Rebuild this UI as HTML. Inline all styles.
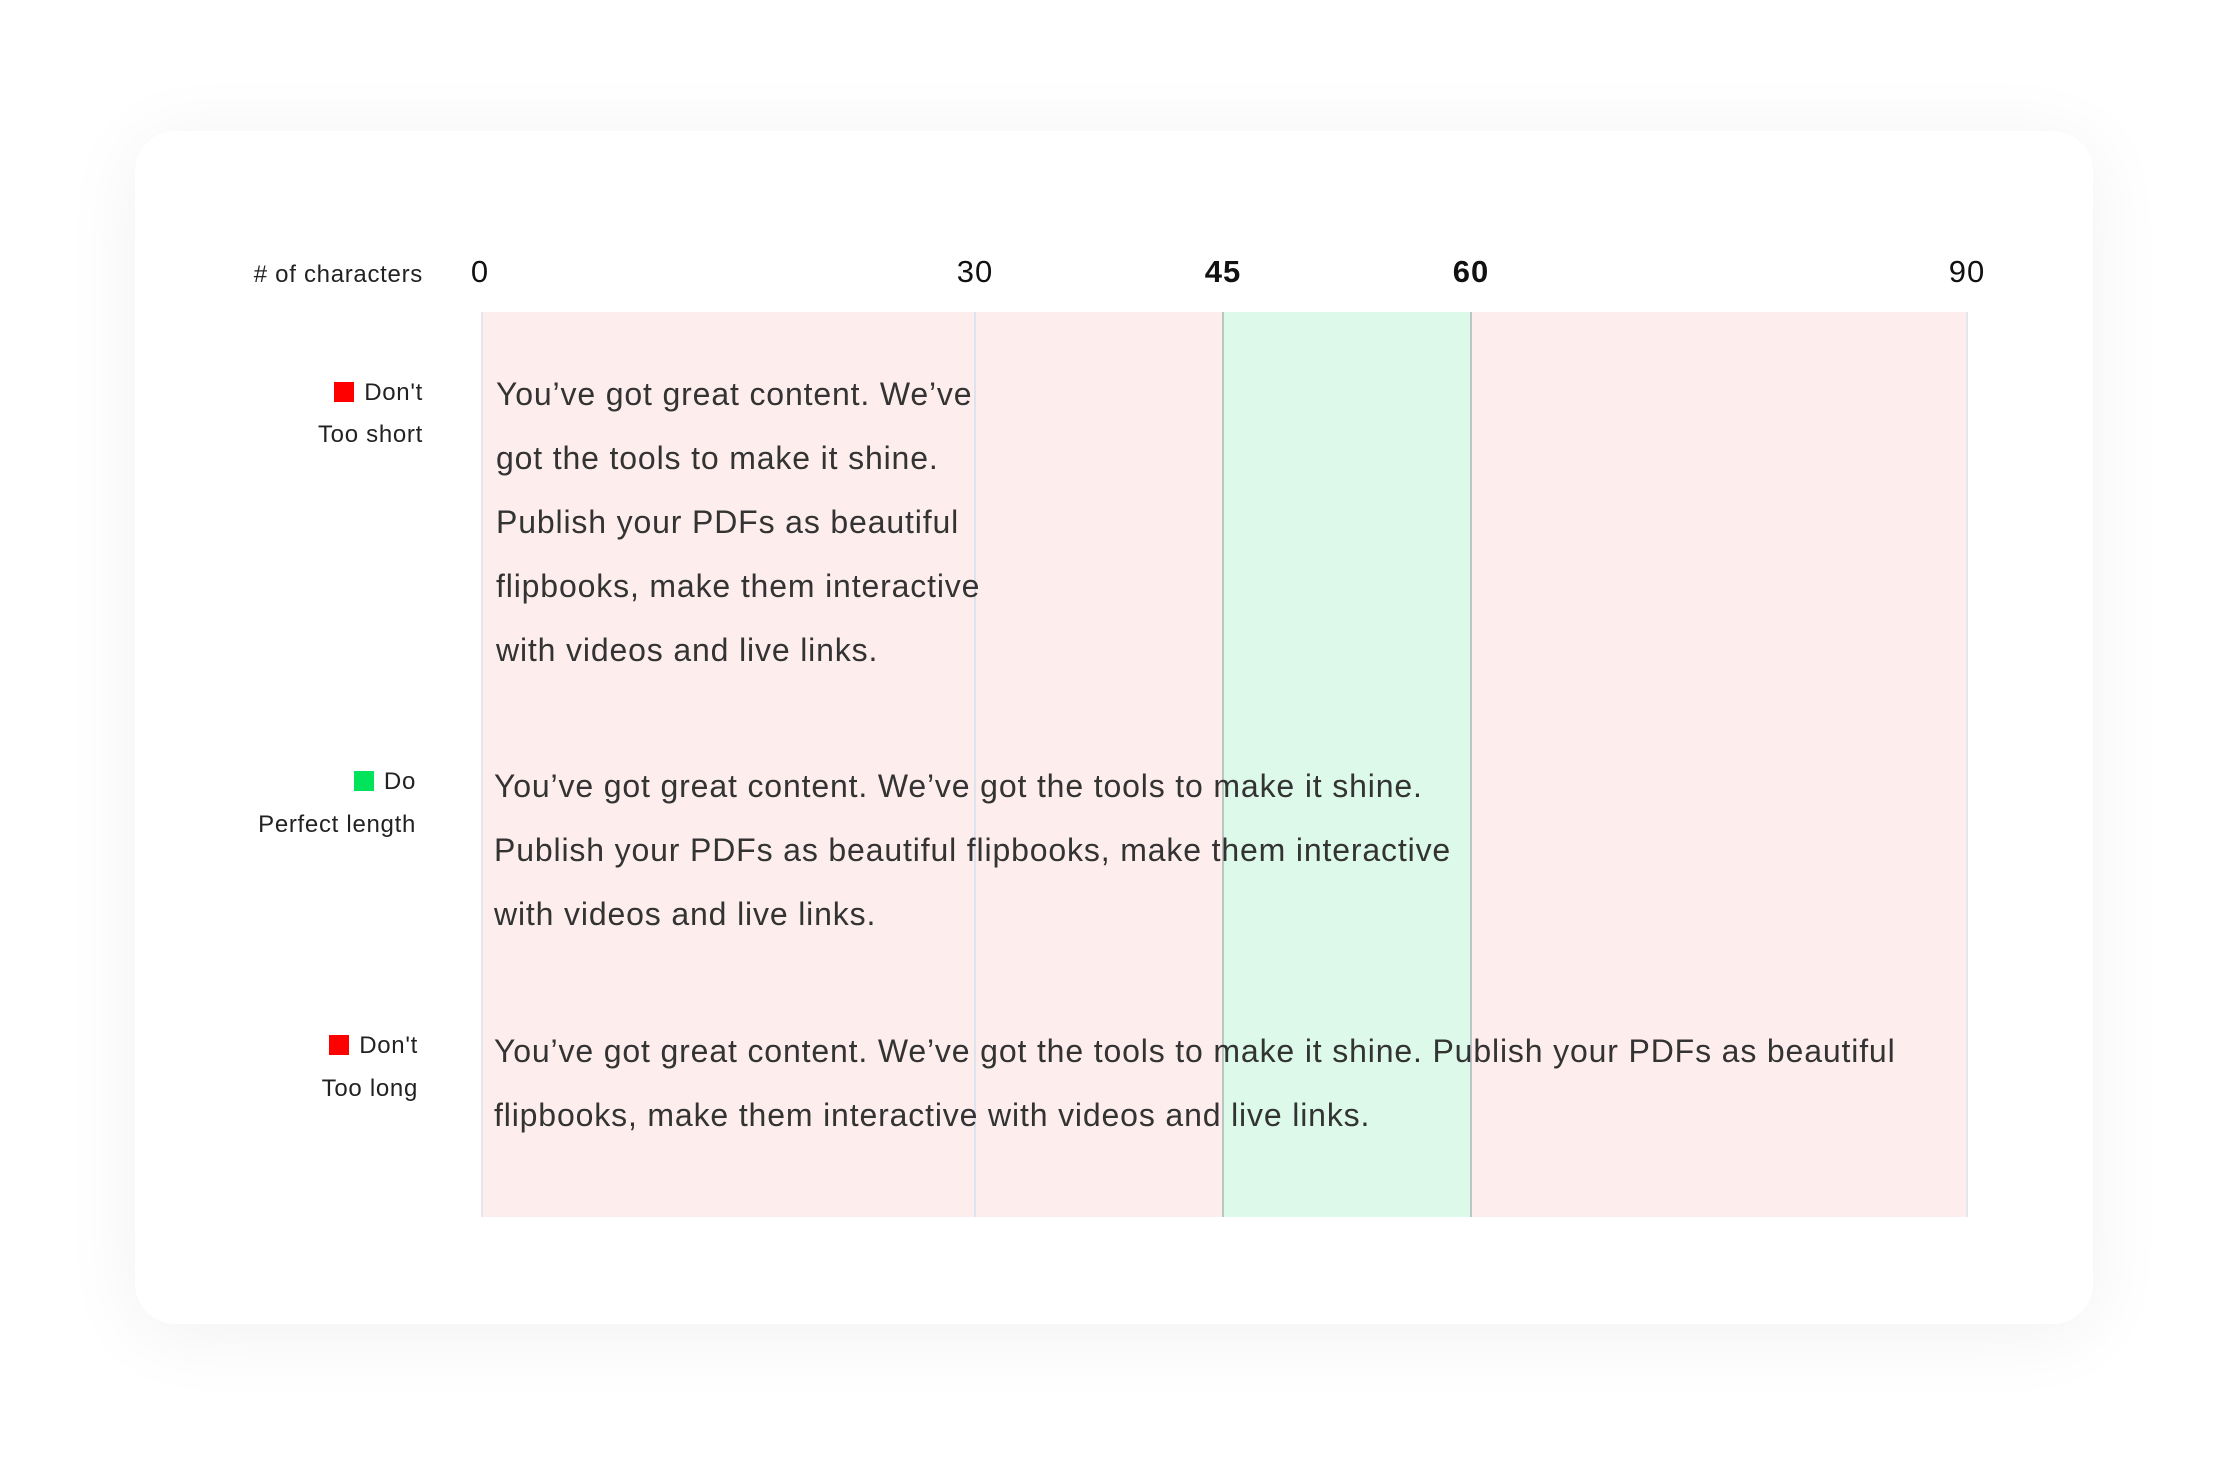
<!DOCTYPE html>
<html><head><meta charset="utf-8"><style>
html,body{margin:0;padding:0;}
body{width:2228px;height:1464px;background:#fff;position:relative;overflow:hidden;font-family:"Liberation Sans",sans-serif;}
.card{position:absolute;left:135px;top:131px;width:1958px;height:1193px;background:#fff;border-radius:40px;box-shadow:0 10px 80px rgba(0,0,0,0.06);}
.band{position:absolute;top:312px;height:905px;}
.vl{position:absolute;top:312px;height:905px;width:2px;}
.tk{position:absolute;top:252px;font-size:31px;line-height:40px;color:#111;transform:translateX(-50%);letter-spacing:1px;}
.txt{position:absolute;font-size:32px;line-height:64px;color:#333;white-space:nowrap;letter-spacing:0.85px;}
.lb{position:absolute;font-size:24px;line-height:32px;color:#222;white-space:nowrap;text-align:right;letter-spacing:0.7px;}
.sq{display:inline-block;width:20px;height:20px;vertical-align:-2px;margin-right:10px;}
</style></head><body>
<div class="card"></div>
<div class="band" style="left:482px;width:741px;background:#fdeeed"></div>
<div class="band" style="left:1223px;width:248px;background:#dcf9e9"></div>
<div class="band" style="left:1471px;width:496px;background:#fdeeed"></div>
<div class="vl" style="left:481px;background:#e4e6ee"></div>
<div class="vl" style="left:974px;background:#dde3ee"></div>
<div class="vl" style="left:1222px;background:#b9c6c2"></div>
<div class="vl" style="left:1470px;background:#bcc6c6"></div>
<div class="vl" style="left:1966px;background:#e4e6ee"></div>

<div class="lb" style="right:1805px;top:259px;">#&nbsp;of characters</div>
<div class="tk" style="left:480px">0</div>
<div class="tk" style="left:975px">30</div>
<div class="tk" style="left:1223px;font-weight:bold">45</div>
<div class="tk" style="left:1471px;font-weight:bold">60</div>
<div class="tk" style="left:1967px">90</div>

<div class="lb" style="right:1805px;top:377px;"><span class="sq" style="background:#ff0000"></span>Don't</div>
<div class="lb" style="right:1805px;top:419px;">Too short</div>
<div class="lb" style="right:1812px;top:766px;"><span class="sq" style="background:#00e35a"></span>Do</div>
<div class="lb" style="right:1812px;top:809px;">Perfect length</div>
<div class="lb" style="right:1810px;top:1030px;"><span class="sq" style="background:#ff0000"></span>Don't</div>
<div class="lb" style="right:1810px;top:1073px;">Too long</div>

<div class="txt" style="left:496px;top:362px;">You’ve got great content. We’ve<br>got the tools to make it shine.<br>Publish your PDFs as beautiful<br>flipbooks, make them interactive<br>with videos and live links.</div>
<div class="txt" style="left:494px;top:754px;">You’ve got great content. We’ve got the tools to make it shine.<br>Publish your PDFs as beautiful flipbooks, make them interactive<br>with videos and live links.</div>
<div class="txt" style="left:494px;top:1019px;">You’ve got great content. We’ve got the tools to make it shine. Publish your PDFs as beautiful<br>flipbooks, make them interactive with videos and live links.</div>
</body></html>
